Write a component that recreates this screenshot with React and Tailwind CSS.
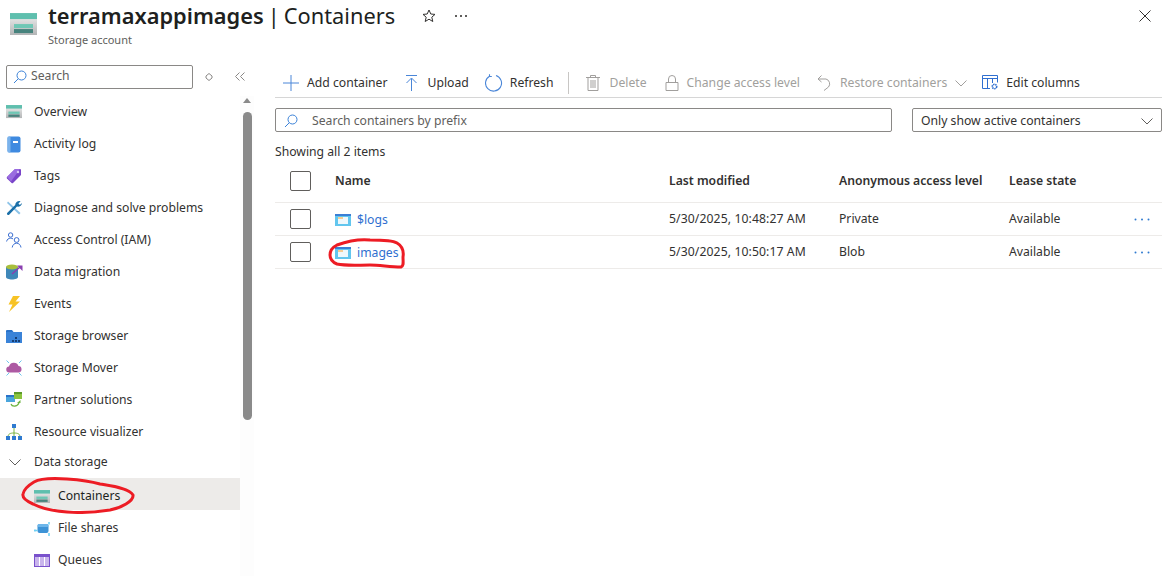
import React from 'react';

const font = { fontFamily: '"Noto Sans", sans-serif' };

const StorageIcon = ({ size = 16 }) => (
  <svg width={size} height={size * 0.82} viewBox="0 0 27 22">
    <defs>
      <linearGradient id="storageBody" x1="0" y1="0" x2="0" y2="1">
        <stop offset="0" stopColor="#f2f2f2" />
        <stop offset="1" stopColor="#b3b5b6" />
      </linearGradient>
    </defs>
    <rect x="0" y="0" width="27" height="22" fill="url(#storageBody)" />
    <rect x="0" y="0" width="27" height="6" fill="#5fbfae" />
    <rect x="4" y="11" width="19" height="4" fill="#6fc7b5" />
    <rect x="4" y="16" width="19" height="4" fill="#47837d" />
  </svg>
);

const ActivityIcon = () => (
  <svg width="14" height="17" viewBox="0 0 14 17">
    <rect x="0.5" y="0.5" width="13" height="16" rx="2" fill="#3f8ae0" />
    <rect x="0.5" y="0.5" width="3" height="16" rx="1" fill="#7bb3ec" />
    <rect x="6" y="5" width="5" height="2" fill="#fff" />
  </svg>
);

const TagIcon = () => (
  <svg width="16" height="16" viewBox="0 0 16 16">
    <path d="M1 9 9 1h5a1 1 0 0 1 1 1v5l-8 8a1 1 0 0 1-1.400 0L1 10.400A1 1 0 0 1 1 9z" fill="#7a45c9" />
    <path d="M1 9 9 1h5L5 13.500z" fill="#9a6ce0" />
    <circle cx="12" cy="4" r="1.200" fill="#d9c8f5" />
  </svg>
);

const WrenchIcon = () => (
  <svg width="16" height="16" viewBox="0 0 16 16">
    <path d="M2 1.500 14.500 13l-1.400 1.600L1 3z" fill="#8cc3e8" />
    <path d="M14.600 1.200 12.500 3.400l.6 1 1 .4L16 3a4 4 0 0 1-5 3.500L3.400 14.600a1.300 1.300 0 0 1-2-1.900L9.200 5A4 4 0 0 1 14.600 1.200z" fill="#1a6fa8" />
  </svg>
);

const PeopleIcon = () => (
  <svg width="16" height="16" viewBox="0 0 16 16" fill="none" stroke="#3c6fd1" strokeWidth="1">
    <circle cx="4.600" cy="3" r="2.200" />
    <path d="M.6 9.500c.4-2.200 2-3.300 4-3.300 1 0 1.700.2 2.400.7" />
    <circle cx="10.600" cy="8" r="2.400" />
    <path d="M6.200 15.500c.3-2.600 2.200-4.300 4.400-4.300s4.100 1.700 4.400 4.300" />
  </svg>
);

const MigrationIcon = () => (
  <svg width="17" height="16" viewBox="0 0 17 16">
    <path d="M0 3v10c0 1.500 2.700 2.500 6 2.500s6-1 6-2.500V3z" fill="#3f87b8" />
    <ellipse cx="6" cy="3" rx="6" ry="2.500" fill="#a8bf3c" />
    <path d="M6 10 14 3" stroke="#8a3fb0" strokeWidth="1.500" />
    <path d="M11 1.500h5.500V7z" fill="#8a3fb0" />
  </svg>
);

const BoltIcon = () => (
  <svg width="14" height="16" viewBox="0 0 14 16">
    <path d="M6 0h7L8.500 5.500H13L2 16l3.500-7.500H1.500z" fill="#f7c325" />
  </svg>
);

const BrowserIcon = () => (
  <svg width="16" height="13" viewBox="0 0 16 13">
    <path d="M0 1a1 1 0 0 1 1-1h5l1.500 2H16v11H0z" fill="#2a72c9" />
    <rect x="0" y="2" width="16" height="11" fill="#3a83d8" />
    <rect x="9" y="7" width="2" height="2" fill="#173e74" />
    <rect x="6" y="10" width="2" height="2" fill="#173e74" />
    <rect x="9" y="10" width="2" height="2" fill="#173e74" />
    <rect x="12" y="10" width="2" height="2" fill="#173e74" />
  </svg>
);

const MoverIcon = () => (
  <svg width="16" height="16" viewBox="0 0 16 16">
    <path d="M.5 .5 3 3M15.500 .5 13 3M.5 15.500 3 13M15.500 15.500 13 13" stroke="#6cc6ee" strokeWidth="1" />
    <path d="M3.500 12.500a3 3 0 0 1-.5-6 5 5 0 0 1 9.500-.5 3.300 3.300 0 0 1 .5 6.500z" fill="#ad5aa3" />
  </svg>
);

const PartnerIcon = () => (
  <svg width="16" height="16" viewBox="0 0 16 16">
    <rect x="0" y="3" width="9" height="7" fill="#4aa5dc" />
    <rect x="0" y="3" width="9" height="2" fill="#2a72c9" />
    <rect x="8" y="0" width="8" height="7" fill="#8cc43f" />
    <rect x="8" y="0" width="8" height="2" fill="#5c9a28" />
    <path d="M5 12c1 3 6 3 8-1" fill="none" stroke="#6cb33f" strokeWidth="1.200" />
    <path d="M11 11h3.500V8z" fill="#6cb33f" />
  </svg>
);

const VisualizerIcon = () => (
  <svg width="16" height="16" viewBox="0 0 16 16">
    <path d="M8 3v6M2 13c0-3 2-4 6-4s6 1 6 4M8 9v4" fill="none" stroke="#7ab342" strokeWidth="1" />
    <rect x="6" y="0" width="4" height="4" fill="#2f7ad0" />
    <rect x="0" y="12" width="4" height="4" fill="#2f7ad0" />
    <rect x="6" y="12" width="4" height="4" fill="#2f7ad0" />
    <rect x="12" y="12" width="4" height="4" fill="#2f7ad0" />
  </svg>
);

const FileSharesIcon = () => (
  <svg width="17" height="16" viewBox="0 0 17 16">
    <rect x="3.500" y="3" width="11" height="9" rx="2" fill="#3d93d6" />
    <rect x="3.500" y="3" width="11" height="3" rx="1.500" fill="#6db6ea" />
    <path d="M0 9.500h3.500M15 1v2.500M15 12v3" stroke="#6fd0f2" strokeWidth="1.500" />
    <circle cx="1" cy="9.500" r="1" fill="#6fd0f2" />
  </svg>
);

const QueuesIcon = () => (
  <svg width="16" height="13" viewBox="0 0 16 13">
    <rect x="0" y="0" width="16" height="13" fill="#7a52cc" />
    <rect x="1" y="3" width="14" height="9" fill="#c9b5ec" />
    <rect x="5" y="3" width="1" height="9" fill="#fff" />
    <rect x="10" y="3" width="1" height="9" fill="#fff" />
  </svg>
);

const ContainerIcon = () => (
  <svg width="16" height="12" viewBox="0 0 16 12" className="shrink-0">
    <rect x="0" y="0" width="16" height="12" fill="#62c6ee" />
    <rect x="0" y="0" width="16" height="2" fill="#3a7fd5" />
    <rect x="3" y="3" width="10" height="7" fill="#eef8fc" />
    <rect x="3" y="3" width="5" height="2" fill="#f5cd94" />
  </svg>
);

const SearchIcon = () => (
  <svg width="14" height="14" viewBox="0 0 14 14" fill="none" stroke="#3b82d8" strokeWidth="1">
    <circle cx="8.500" cy="5.500" r="4.500" />
    <path d="M5.300 8.700 1 13" />
  </svg>
);

const Chevron = ({ color = '#605e5c', w = 12 }) => (
  <svg width={w} height="7" viewBox="0 0 12 7" fill="none" stroke={color} strokeWidth="1">
    <path d="M.5.500 6 6 11.500.500" />
  </svg>
);

const navItems = [
  { label: 'Overview', icon: <StorageIcon /> },
  { label: 'Activity log', icon: <ActivityIcon /> },
  { label: 'Tags', icon: <TagIcon /> },
  { label: 'Diagnose and solve problems', icon: <WrenchIcon /> },
  { label: 'Access Control (IAM)', icon: <PeopleIcon /> },
  { label: 'Data migration', icon: <MigrationIcon /> },
  { label: 'Events', icon: <BoltIcon /> },
  { label: 'Storage browser', icon: <BrowserIcon /> },
  { label: 'Storage Mover', icon: <MoverIcon /> },
  { label: 'Partner solutions', icon: <PartnerIcon /> },
  { label: 'Resource visualizer', icon: <VisualizerIcon /> },
];

const rows = [
  { name: '$logs', modified: '5/30/2025, 10:48:27 AM', access: 'Private' },
  { name: 'images', modified: '5/30/2025, 10:50:17 AM', access: 'Blob' },
];

const Checkbox = () => <div className="h-5 w-[21px] rounded-[2px] border border-[#605e5c]" />;

const ToolbarButton = ({ icon, label, disabled, iconBox, gap, className = '' }) => (
  <div className={`flex items-center ${className}`}>
    <div className={`flex items-center justify-center ${iconBox}`}>{icon}</div>
    <span className={`${gap} ${disabled ? 'text-[#a19f9d]' : 'text-[#323130]'}`}>{label}</span>
  </div>
);

const Sidebar = () => (
  <aside className="flex w-[254px] shrink-0 flex-col">
    <div className="flex h-[27px] items-center">
      <div className="ml-1.5 flex h-6 w-[187px] items-center rounded-[2px] border border-[#8a8886] pl-1.5">
        <SearchIcon />
        <span className="ml-[4px] text-[#605e5c]">Search</span>
      </div>
      <svg width="8" height="8" viewBox="0 0 8 8" className="ml-3" fill="none" stroke="#8a8886" strokeWidth="1">
        <path d="M4 .500 7 3v2L4 7.500 1 5V3z" />
      </svg>
      <svg width="10" height="9" viewBox="0 0 10 9" className="ml-[22px]" fill="none" stroke="#8a8886" strokeWidth="1">
        <path d="M4.500.500.500 4.500l4 4M9.500.500l-4 4 4 4" />
      </svg>
    </div>
    <div className="mt-[6px] flex min-h-0 flex-1">
      <nav className="w-[240px] shrink-0">
        {navItems.map((item) => (
          <div key={item.label} className="flex h-8 items-center">
            <div className="flex w-[34px] shrink-0 justify-center pl-[1px] pr-[7px]">{item.icon}</div>
            <span className="text-[#323130]">{item.label}</span>
          </div>
        ))}
        <div className="flex h-[30px] items-center pb-[2px]">
          <div className="flex w-[34px] shrink-0 justify-center pr-[5px]"><Chevron /></div>
          <span className="text-[#323130]">Data storage</span>
        </div>
        <div className="flex h-8 items-center bg-[#edebe9] pl-[34px] pt-[5px]">
          <div className="w-6 shrink-0"><StorageIcon /></div>
          <span className="text-[#201f1e]">Containers</span>
        </div>
        <div className="flex h-8 items-center pl-[34px] pt-[5px]">
          <div className="w-6 shrink-0"><FileSharesIcon /></div>
          <span className="text-[#323130]">File shares</span>
        </div>
        <div className="flex h-8 items-center pl-[34px] pt-[5px]">
          <div className="w-6 shrink-0"><QueuesIcon /></div>
          <span className="text-[#323130]">Queues</span>
        </div>
      </nav>
      <div className="flex w-[14px] flex-col items-center bg-[#fdfdfd]">
        <div className="mt-[2px] h-0 w-0 border-x-[4px] border-b-[5px] border-x-transparent border-b-[#8a8a8a]" />
        <div className="mt-[9px] h-[308px] w-[9px] rounded-[5px] bg-[#8a8a8a]" />
      </div>
    </div>
  </aside>
);

const Toolbar = () => (
  <div className="mt-[3px] flex h-8 items-center border-b border-[#d6d6d6] pl-2 pt-[3px]">
    <ToolbarButton
      iconBox="w-4"
      gap="ml-2"
      label="Add container"
      icon={<svg width="16" height="16" viewBox="0 0 16 16" stroke="#4a86d8" strokeWidth="1"><path d="M8 0v16M0 8h16" /></svg>}
    />
    <ToolbarButton
      className="ml-[17px]"
      iconBox="w-[13px]"
      gap="ml-[10px]"
      label="Upload"
      icon={<svg width="13" height="16" viewBox="0 0 13 16" fill="none" stroke="#4a86d8" strokeWidth="1"><path d="M1 .500h11M6.500 16V3.500M1.500 8l5-5 5 5" /></svg>}
    />
    <ToolbarButton
      className="ml-[16px]"
      iconBox="w-[18px]"
      gap="ml-[7px]"
      label="Refresh"
      icon={<svg width="18" height="18" viewBox="0 0 18 18" fill="none" stroke="#4a86d8" strokeWidth="1.100"><path d="M11 1.500a8 8 0 1 1-6.500.700M4.500 .200v2.300h2.300" /></svg>}
    />
    <div className="ml-[15px] h-[22px] w-px bg-[#c8c6c4]" />
    <ToolbarButton
      className="ml-[17px]"
      iconBox="w-[14px]"
      gap="ml-[9px]"
      disabled
      label="Delete"
      icon={<svg width="14" height="16" viewBox="0 0 14 16" fill="none" stroke="#a19f9d" strokeWidth="1"><path d="M0 2.500h14M4.500 2.500V.500h5v2M2 2.500V15.500h10V2.500M5 5v8M7 5v8M9 5v8" /></svg>}
    />
    <ToolbarButton
      className="ml-[18px]"
      iconBox="w-[14px]"
      gap="ml-2"
      disabled
      label="Change access level"
      icon={<svg width="14" height="16" viewBox="0 0 14 16" fill="none" stroke="#a19f9d" strokeWidth="1"><path d="M1 7.500h12v8H1zM3.500 7.500V4a3.500 3.500 0 0 1 7 0v3.500" /></svg>}
    />
    <ToolbarButton
      className="ml-[17px]"
      iconBox="w-[15px]"
      gap="ml-2"
      disabled
      label="Restore containers"
      icon={<svg width="15" height="16" viewBox="0 0 15 16" fill="none" stroke="#a19f9d" strokeWidth="1"><path d="M4.500.500 1 4l3.500 3M1 4h8a5 5 0 0 1 2.500 8L7 15.500" /></svg>}
    />
    <div className="ml-2"><Chevron color="#a19f9d" /></div>
    <ToolbarButton
      className="ml-[15px]"
      iconBox="w-4"
      gap="ml-2"
      label="Edit columns"
      icon={
        <svg width="16" height="15" viewBox="0 0 16 15" fill="none">
          <path d="M.500 13.500V.500h15v7M.500 13.500H8M.500 3.500h15M5.500 3.500v10M10.500 3.500V8" stroke="#2f6fd0" />
          <circle cx="12.500" cy="11.500" r="2.200" stroke="#2f6fd0" strokeWidth="1.600" strokeDasharray="1.400 .6" />
        </svg>
      }
    />
  </div>
);

const Table = () => (
  <div>
    <div className="flex h-[42px] items-center border-b border-[#edebe9] pb-[2px] font-semibold text-[#323130]">
      <div className="w-[60px] shrink-0 pl-[15px]"><Checkbox /></div>
      <div className="w-[334px] shrink-0 pt-[2px]">Name</div>
      <div className="w-[170px] shrink-0 pt-[2px]">Last modified</div>
      <div className="w-[170px] shrink-0 pt-[2px]">Anonymous access level</div>
      <div className="pt-[2px]">Lease state</div>
    </div>
    {rows.map((row) => (
      <div key={row.name} className="flex h-[33px] items-center border-b border-[#edebe9] text-[#323130]">
        <div className="w-[60px] shrink-0 pl-[15px]"><Checkbox /></div>
        <div className="flex w-[334px] shrink-0 items-center gap-[6px] pt-[2px] text-[#2f6fd0]">
          <ContainerIcon />
          <span>{row.name}</span>
        </div>
        <div className="w-[170px] shrink-0 tracking-[0.1px]">{row.modified}</div>
        <div className="w-[170px] shrink-0">{row.access}</div>
        <div className="w-[125px] shrink-0">Available</div>
        <svg width="16" height="3" viewBox="0 0 16 3" fill="#2f7ad0">
          <circle cx="1.500" cy="1.500" r="1" /><circle cx="8" cy="1.500" r="1" /><circle cx="14.500" cy="1.500" r="1" />
        </svg>
      </div>
    ))}
  </div>
);

const App = () => (
  <div className="relative flex h-[576px] w-[1172px] flex-col overflow-hidden bg-white text-[12.2px]" style={font}>
    <header className="relative flex h-[63px] shrink-0">
      <div className="ml-[10px] mt-[13px]"><StorageIcon size={27} /></div>
      <div className="ml-[11px] pt-[1px]">
        <div className="flex items-center text-[21.8px] leading-[30px] text-[#201f1e]">
          <span className="font-semibold">terramaxappimages</span>
          <span className="ml-1">|</span>
          <span className="ml-1">Containers</span>
          <svg width="14" height="14" viewBox="0 0 14 14" className="ml-[27px]" fill="none" stroke="#323130" strokeWidth="1">
            <path d="M7 1l1.800 4 4.200.4-3.200 2.800 1 4.300L7 10.200l-3.800 2.300 1-4.300L1 5.400 5.200 5z" />
          </svg>
          <svg width="12" height="2" viewBox="0 0 12 2" className="ml-[19px]" fill="#605e5c">
            <rect x="0" y="0" width="2" height="2" /><rect x="5" y="0" width="2" height="2" /><rect x="10" y="0" width="2" height="2" />
          </svg>
        </div>
        <div className="mt-[1px] text-[11px] leading-[16px] text-[#605e5c]">Storage account</div>
      </div>
      <svg width="12" height="12" viewBox="0 0 12 12" className="ml-auto mr-[21px] mt-[10px]" stroke="#323130" strokeWidth="1">
        <path d="M.500.500l11 11M11.500.500l-11 11" />
      </svg>
    </header>
    <div className="flex min-h-0 flex-1">
      <Sidebar />
      <main className="ml-[21px] mr-[10px] flex-1">
        <Toolbar />
        <div className="mt-[10px] flex gap-5">
          <div className="flex h-6 w-[617px] items-center rounded-[2px] border border-[#8a8886] pl-2 pt-[2px]">
            <SearchIcon />
            <span className="ml-[14px] text-[#605e5c]">Search containers by prefix</span>
          </div>
          <div className="flex h-6 w-[250px] items-center justify-between rounded-[2px] border border-[#8a8886] pl-2 pr-2 pt-[2px]">
            <span className="text-[#323130]">Only show active containers</span>
            <Chevron />
          </div>
        </div>
        <div className="mt-[11px] leading-[18px] text-[#323130]">Showing all 2 items</div>
        <Table />
      </main>
    </div>

    {/* hand drawn annotations */}
    <svg width="114" height="38" viewBox="0 0 114 38" className="absolute left-[21px] top-[476px]" fill="none" stroke="#ed1c24" strokeWidth="3">
      <path d="M13 6C20 2 32 2 46 3C60 4 72 6 79 8C90 10 108 12 112 19C113 25 100 32 89 34C70 37 58 37 46 36C30 35 18 31 12 28C5 25 1 22 2 18C3 13 8 9 13 6Z" />
    </svg>
    <svg width="78" height="33" viewBox="0 0 78 33" className="absolute left-[328px] top-[237px]" fill="none" stroke="#ed1c24" strokeWidth="3">
      <path d="M9 8C20 4 32 2 42 3C52 3 64 3 69 6C74 9 76 14 75 20C75 25 76 29 73 30C62 30 52 28 42 28C30 28 18 29 9 27C4 25 2 22 2 18C2 14 5 10 9 8Z" />
    </svg>
  </div>
);

export default App;
